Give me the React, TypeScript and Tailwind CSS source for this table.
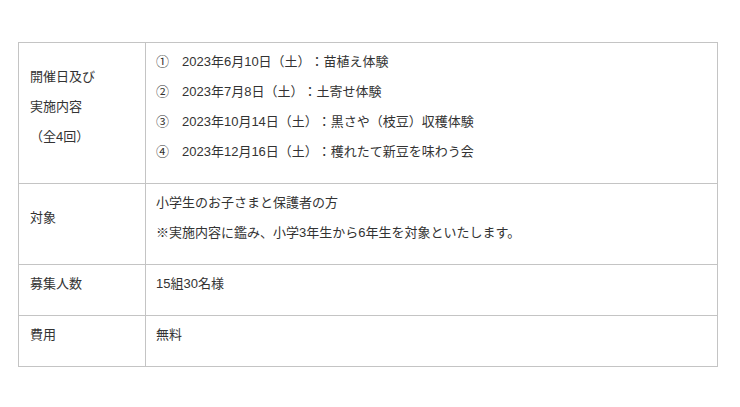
const rows: { label: string[]; body: string[] }[] = [
  {
    label: ['開催日及び', '実施内容', '（全4回）'],
    body: [
      '①　2023年6月10日（土）：苗植え体験',
      '②　2023年7月8日（土）：土寄せ体験',
      '③　2023年10月14日（土）：黒さや（枝豆）収穫体験',
      '④　2023年12月16日（土）：穫れたて新豆を味わう会',
    ],
  },
  {
    label: ['対象'],
    body: ['小学生のお子さまと保護者の方', '※実施内容に鑑み、小学3年生から6年生を対象といたします。'],
  },
  { label: ['募集人数'], body: ['15組30名様'] },
  { label: ['費用'], body: ['無料'] },
];

export default function App() {
  return (
    <div
      className="w-[740px] h-[407px] bg-white pt-[42px] pl-[18px] text-[13px] leading-[18px] text-[#333] [text-spacing-trim:space-all]"
      style={{ fontFamily: '"Liberation Sans", "Noto Sans CJK JP", sans-serif' }}
    >
      <table className="w-[700px] border-collapse">
        <tbody>
          {rows.map((row, i) => (
            <tr key={i}>
              <td className="w-[127px] border border-[#c4c4c4] px-[11px] py-[10px] align-middle">
                {row.label.map((t, j) => (
                  <p key={j} className="mb-[12px] whitespace-nowrap">
                    {t}
                  </p>
                ))}
              </td>
              <td className="border border-[#c4c4c4] px-[10px] py-[10px] align-middle">
                {row.body.map((t, j) => (
                  <p key={j} className="mb-[12px] whitespace-nowrap">
                    {t}
                  </p>
                ))}
              </td>
            </tr>
          ))}
        </tbody>
      </table>
    </div>
  );
}
